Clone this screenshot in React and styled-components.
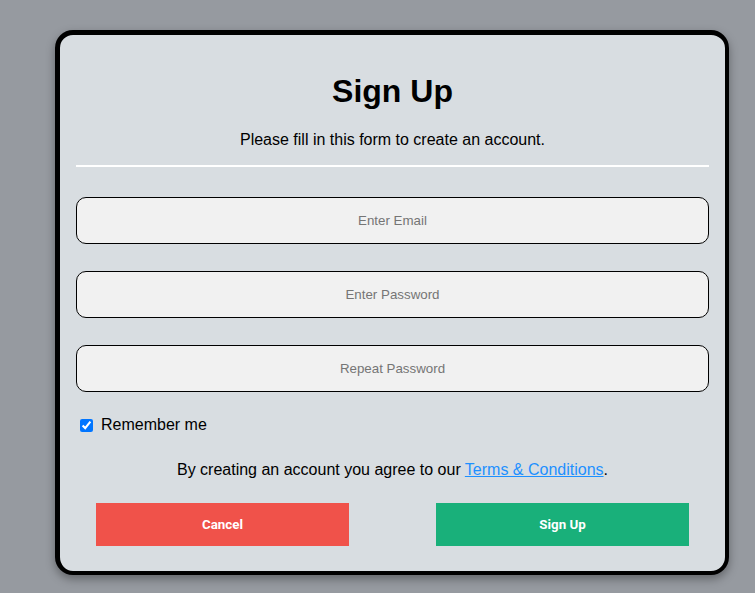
import {useState} from 'react';
import styled, {createGlobalStyle} from 'styled-components';

const GlobalStyle = createGlobalStyle`
  html, body {
    margin: 0;
    padding: 0;
    background: #969aa0;
    font-family: "Liberation Sans", Arial, sans-serif;
  }
  * {
    box-sizing: border-box;
  }
`;

const App = () => {
  const [remember, setRemember] = useState(true);

  return (
    <>
      <GlobalStyle />
      <Page>
        <Card>
          <Title>Sign Up</Title>
          <Subtitle>Please fill in this form to create an account.</Subtitle>
          <Divider />
          <Input type="text" placeholder="Enter Email" />
          <Input type="password" placeholder="Enter Password" />
          <Input type="password" placeholder="Repeat Password" />
          <RememberRow>
            <Checkbox
              type="checkbox"
              checked={remember}
              onChange={() => setRemember((r) => !r)}
            />
            Remember me
          </RememberRow>
          <Terms>
            By creating an account you agree to our{' '}
            <TermsLink href="#">Terms &amp; Conditions</TermsLink>.
          </Terms>
          <ButtonRow>
            <Button type="button" color="#f0524a">Cancel</Button>
            <Button type="submit" color="#19b07a">Sign Up</Button>
          </ButtonRow>
        </Card>
      </Page>
    </>
  );
};

const Page = styled.div`
  width: 755px;
  height: 593px;
  padding: 30px 0 0 55px;
`;

const Card = styled.form`
  width: 674px;
  height: 545px;
  border: 5px solid #000;
  border-right-width: 4px;
  border-bottom-width: 4px;
  border-radius: 18px;
  background: #d8dde1;
  box-shadow: 0 4px 10px rgba(0, 0, 0, 0.35);
  padding: 0 16px 24px;
  display: flex;
  flex-direction: column;
`;

const Title = styled.h1`
  margin: 38px 0 0;
  text-align: center;
  font-size: 32px;
  line-height: 37px;
  font-weight: 700;
  color: #000;
`;

const Subtitle = styled.p`
  margin: 21px 0 0;
  text-align: center;
  font-size: 16px;
  line-height: 18px;
  color: #000;
`;

const Divider = styled.hr`
  width: 100%;
  margin: 16px 0 0;
  border: none;
  height: 2px;
  background: #fff;
`;

const Input = styled.input`
  width: 100%;
  height: 47px;
  margin-top: 30px;
  border: 1px solid #000;
  border-radius: 10px;
  background: #f1f1f1;
  text-align: center;
  font-family: "Liberation Sans", Arial, sans-serif;
  font-size: 13.33px;
  color: #000;
  outline: none;

  & + & {
    margin-top: 27px;
  }

  &::placeholder {
    color: #757575;
  }
`;

const RememberRow = styled.label`
  display: flex;
  align-items: center;
  margin: 24px 0 0 4px;
  font-size: 16px;
  line-height: 18px;
  color: #000;
`;

const Checkbox = styled.input`
  width: 13px;
  height: 13px;
  margin: 0 8px 0 0;
  accent-color: #0075ff;
`;

const Terms = styled.p`
  margin: 27px 0 0;
  text-align: center;
  font-size: 16px;
  line-height: 18px;
  color: #000;
`;

const TermsLink = styled.a`
  color: #1e90ff;
  text-decoration: underline;
`;

const ButtonRow = styled.div`
  display: flex;
  justify-content: space-between;
  padding: 0 20px;
  margin-top: 24px;
`;

const Button = styled.button`
  width: 253px;
  height: 43px;
  border: none;
  background: ${(props) => props.color};
  color: #fff;
  font-family: Roboto, "Liberation Sans", sans-serif;
  font-size: 13.33px;
  font-weight: 700;
  cursor: pointer;
`;

export default App;
